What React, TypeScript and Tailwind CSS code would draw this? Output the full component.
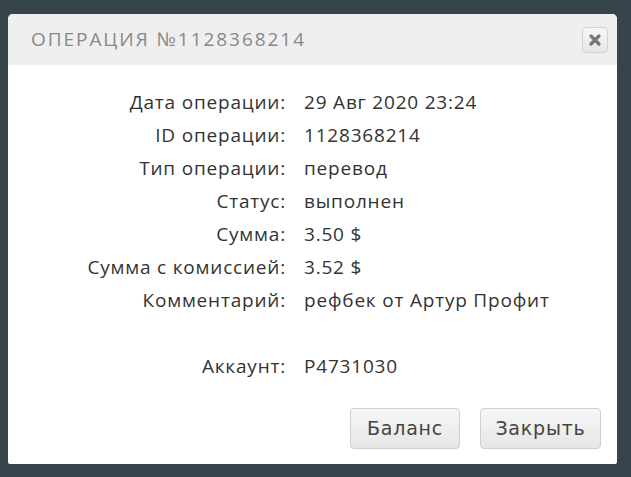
import React from "react";

const rows = [
  { label: "Дата операции:", value: "29 Авг 2020 23:24" },
  { label: "ID операции:", value: "1128368214" },
  { label: "Тип операции:", value: "перевод" },
  { label: "Статус:", value: "выполнен" },
  { label: "Сумма:", value: "3.50 $" },
  { label: "Сумма с комиссией:", value: "3.52 $" },
  { label: "Комментарий:", value: "рефбек от Артур Профит" },
];

function Row({ label, value }: { label: string; value: string }) {
  return (
    <div className="flex h-[33px] items-center">
      <div className="w-[280px] pr-[2px] text-right">{label}</div>
      <div className="pl-[16px]">{value}</div>
    </div>
  );
}

export default function App() {
  return (
    <div className="h-[477px] w-[631px] bg-[#36444b] pt-[14px] pl-[8px]">
      <div className="flex h-[450px] w-[609px] flex-col overflow-hidden rounded-t-[5px] rounded-b-[2px] bg-white">
        <div className="flex h-[51px] items-center justify-between bg-[#efefef] pl-[23px] pr-[9px]">
          <h2 className="font-['Open_Sans',sans-serif] text-[19px] tracking-[1.95px] text-[#888888]">
            ОПЕРАЦИЯ №1128368214
          </h2>
          <button className="flex h-[26px] w-[26px] items-center justify-center rounded-[4px] border border-[#d2d2d2] bg-gradient-to-b from-[#f6f6f6] to-[#e6e6e6]">
            <svg width="14" height="14" viewBox="0 0 14 14">
              <path
                d="M3 3 L11 11 M11 3 L3 11"
                stroke="#777"
                strokeWidth="3.2"
                strokeLinecap="round"
              />
            </svg>
          </button>
        </div>
        <div className="flex flex-1 flex-col pt-[21px] font-['Open_Sans',sans-serif] text-[19px] tracking-[0.8px] text-[#333333]">
          {rows.map((r) => (
            <Row key={r.label} label={r.label} value={r.value} />
          ))}
          <div className="h-[33px]" />
          <Row label="Аккаунт:" value="P4731030" />
          <div className="mt-auto flex justify-end gap-[20px] pr-[16px] pb-[15px]">
            <button className="h-[41px] w-[110px] rounded-[4px] border border-[#cfcfcf] bg-gradient-to-b from-[#f7f7f7] to-[#e6e6e6] font-['DejaVu_Sans',sans-serif] text-[19px] text-[#444]">
              Баланс
            </button>
            <button className="h-[41px] w-[121px] rounded-[4px] border border-[#cfcfcf] bg-gradient-to-b from-[#f7f7f7] to-[#e6e6e6] font-['DejaVu_Sans',sans-serif] text-[19px] text-[#444]">
              Закрыть
            </button>
          </div>
        </div>
      </div>
    </div>
  );
}
